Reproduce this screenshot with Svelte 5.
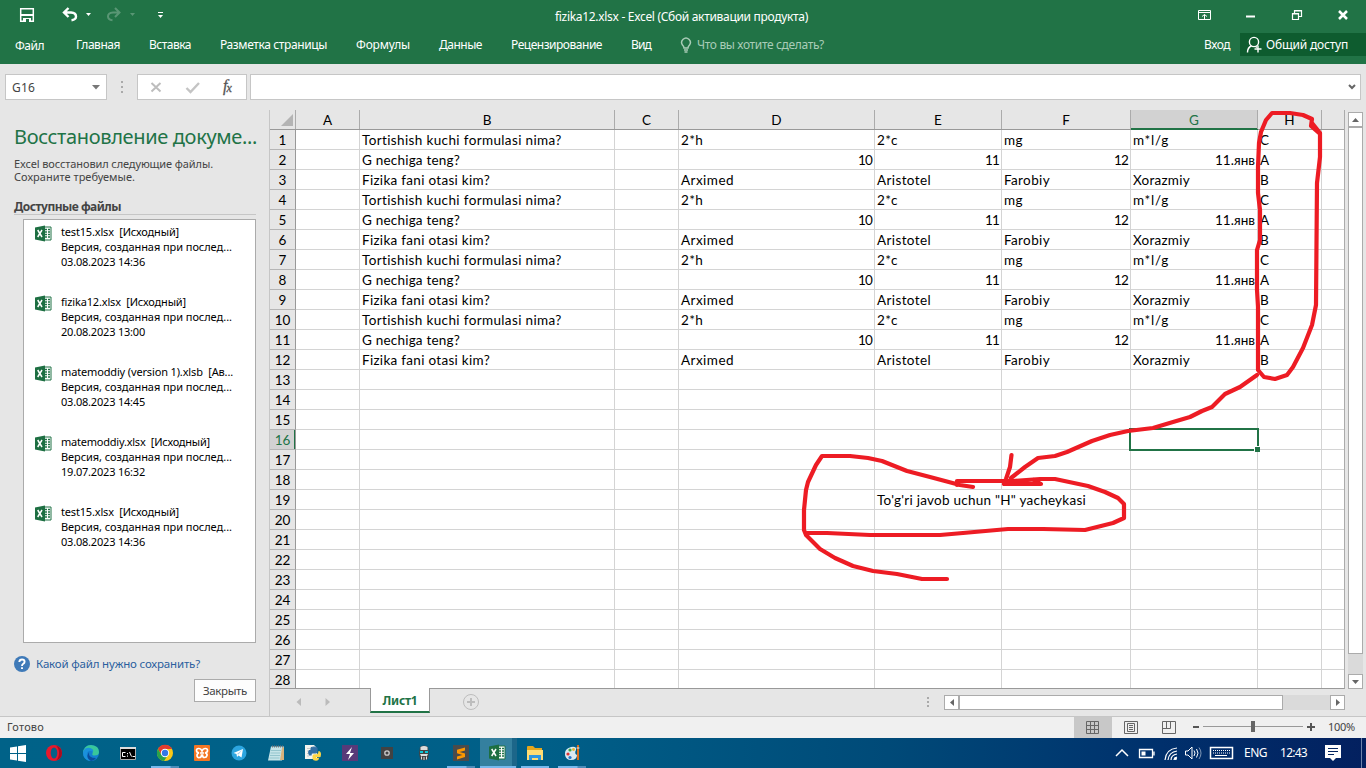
<script>
  // Spreads the letters of a label so that it takes up the given width
  function fit(node, width) {
    if (!width) return;
    const natural = node.getBoundingClientRect().width;
    node.style.letterSpacing = (width - natural) / node.textContent.length + 'px';
  }

  const tabs = [
    ['Главная', 44], ['Вставка', 42], ['Разметка страницы', 107], ['Формулы', 54],
    ['Данные', 43], ['Рецензирование', 91], ['Вид', 20]
  ];

  const columns = [
    ['A', 64], ['B', 255], ['C', 64], ['D', 196], ['E', 127], ['F', 129], ['G', 127], ['H', 64], ['', 23]
  ];

  const widths = {
    'Tortishish kuchi formulasi nima?': 200, 'G nechiga teng?': 98, 'Fizika fani otasi kim?': 128,
    '2*h': 22, '2*c': 21, Arximed: 53, Aristotel: 54, mg: 19, Farobiy: 46, 'm*l/g': 36, Xorazmiy: 57,
    '11.янв': 40, '10': 14, '11': 14, '12': 14, 'To\'g\'ri javob uchun "H" yacheykasi': 209
  };

  const pattern = [
    ['', 'Tortishish kuchi formulasi nima?', '', '2*h', '2*c', 'mg', 'm*l/g', 'C', ''],
    ['', 'G nechiga teng?', '', '10', '11', '12', '11.янв', 'A', ''],
    ['', 'Fizika fani otasi kim?', '', 'Arximed', 'Aristotel', 'Farobiy', 'Xorazmiy', 'B', '']
  ];

  const rows = Array.from({ length: 28 }, (_, i) => {
    if (i < 12) return pattern[i % 3];
    const empty = Array(9).fill('');
    if (i === 18) empty[4] = 'To\'g\'ri javob uchun "H" yacheykasi';
    return empty;
  });

  const files = [
    ['test15.xlsx  [Исходный]', '03.08.2023 14:36', 118],
    ['fizika12.xlsx  [Исходный]', '20.08.2023 13:00', 125],
    ['matemoddiy (version 1).xlsb  [Ав...', '03.08.2023 14:45', 172],
    ['matemoddiy.xlsx  [Исходный]', '19.07.2023 16:32', 149],
    ['test15.xlsx  [Исходный]', '03.08.2023 14:36', 118]
  ];

  const apps = [
    'opera', 'edge', 'cmd', 'chrome', 'xampp', 'telegram', 'notepad', 'python',
    'bolt', 'camera', 'skull', 'sublime', 'excel', 'explorer', 'paint'
  ];
  const stacked = ['chrome', 'sublime', 'excel', 'paint'];
</script>

{#snippet t(text, w)}<span class="t" use:fit={w}>{text}</span>{/snippet}

{#snippet excelLogo()}
  <path d="M10 3h7v13h-7z" fill="#fff" stroke="#217346" />
  <path d="M11 5.500h2M14 5.500h2M11 8h2M14 8h2M11 10.500h2M14 10.500h2M11 13h2M14 13h2" stroke="#217346" stroke-width="1.300" />
  <path d="M1 3.500 11 1.500v16L1 15.500z" fill="#1d6f42" />
  <path d="m3.700 6 4.300 7M8 6l-4.300 7" stroke="#fff" stroke-width="1.500" />
{/snippet}

<div class="screen">
  <header>
    <div class="titlebar">
      <svg class="quick" width="190" height="32" fill="none">
        <path d="M20.700 8.700h12.600v12.600H20.700z" stroke="#fff" stroke-width="1.500" />
        <path d="M20.500 15h13" stroke="#fff" stroke-width="2" />
        <path d="M23 18h8v4h-8z" fill="#fff" />
        <path d="M26 19h3v3h-3z" fill="#217346" />
        <path d="M68.500 8 64 12.500l4.500 4.500M64.500 12.500H71q5 .3 5 4 0 3.200-4.500 3.700" stroke="#fff" stroke-width="2.400" />
        <path d="M86 13h5l-2.500 3z" fill="#fff" />
        <g opacity=".25"><path d="m115 8 4.500 4.500L115 17M119 12.500h-6q-5 .3-5 4 0 3.200 4.500 3.700" stroke="#fff" stroke-width="2" /><path d="M130 13h5l-2.500 3z" fill="#fff" /></g>
        <path d="M158 12.500h5" stroke="#fff" />
        <path d="M158 15h5l-2.500 3z" fill="#fff" />
      </svg>
      <span class="doc">{@render t('fizika12.xlsx - Excel (Сбой активации продукта)', 253)}</span>
      <svg class="window" width="170" height="32" fill="none" stroke="#fff">
        <path d="M2.500 10.500h12v9h-12zM2.500 12.500h12M8.500 19v-4.500M6 16.500l2.500-2 2.500 2" />
        <path d="M50 16.500h9" stroke-width="2" />
        <path d="M98.500 13.500v-3h7v6h-3M96.500 13.500h6v6h-6zM96.500 14h6M98.500 11h7" stroke-width="1.200" />
        <path d="m143 11 8 8M151 11l-8 8" stroke-width="2.500" />
      </svg>
    </div>
    <nav>
      <span class="file">{@render t('Файл', 29)}</span>
      {#each tabs as [name, w]}<span class="tab" style="width:{w}px">{@render t(name, w)}</span>{/each}
      <svg width="12" height="16" fill="none" stroke="#a9ccb7" stroke-width="1.500"><path d="M4 11q0-1.500-1.500-3A4.300 4.300 0 1 1 9.500 8Q8 9.500 8 11zM4 13h4M4.500 15h3" /></svg>
      <span class="ask">{@render t('Что вы хотите сделать?', 127)}</span>
      <span class="login">{@render t('Вход', 26)}</span>
      <span class="share">
        <svg width="17" height="18" fill="none" stroke="#fff" stroke-width="1.400"><circle cx="8" cy="6" r="4.600" /><path d="M1.500 16.500q0-5 4-6.500M9.500 10.500l1.500 1M12 9.500v7M8.500 13h7" /></svg>
        {@render t('Общий доступ', 82)}
      </span>
    </nav>
  </header>

  <div class="formula">
    <div class="box name">{@render t('G16', 23)}<svg width="8" height="5"><path d="M0 0h8L4 4.500z" fill="#777" /></svg></div>
    <svg class="dots" width="3" height="14" fill="#aaa"><path d="M0 1h2v2H0zM0 6h2v2H0zM0 11h2v2H0z" /></svg>
    <div class="box tools">
      <svg width="108" height="24" fill="none">
        <path d="m13.500 8 9 8.500M22.500 8l-9 8.500" stroke="#bdbdbd" stroke-width="2" />
        <path d="m48.500 13 4 4 8.500-9" stroke="#c4c4c4" stroke-width="2.400" />
        <text x="85" y="16" font-family="Liberation Serif" font-style="italic" font-size="16" fill="#555" stroke="#555" stroke-width=".3">f<tspan font-size="12" dx="-1" dy="1">x</tspan></text>
      </svg>
    </div>
    <div class="box input"><svg width="8" height="6" fill="none" stroke="#666" stroke-width="2"><path d="m1 1 3 3 3-3" /></svg></div>
  </div>

  <main>
    <aside>
      <h1>{@render t('Восстановление докуме...', 243)}</h1>
      <p>{@render t('Excel восстановил следующие файлы.', 199)}<br />{@render t('Сохраните требуемые.', 121)}</p>
      <h2>{@render t('Доступные файлы', 107)}</h2>
      <div class="files">
        {#each files as [title, date, w]}
          <div class="item">
            <svg width="18" height="19" fill="none">{@render excelLogo()}</svg>
            <div>
              <div>{@render t(title, w)}</div>
              <div>{@render t('Версия, созданная при послед...', 171)}</div>
              <div>{@render t(date, 84)}</div>
            </div>
          </div>
        {/each}
      </div>
      <div class="help">
        <svg width="16" height="16"><circle cx="8" cy="8" r="8" fill="#3f7ab8" /><path d="M5.300 6Q5.500 3.500 8 3.500t2.600 2.200Q10.600 7 9 8q-1 .6-1 2M8 11.300v1.800" fill="none" stroke="#fff" stroke-width="1.900" /></svg>
        {@render t('Какой файл нужно сохранить?', 164)}
      </div>
      <button>{@render t('Закрыть', 44)}</button>
    </aside>

    <section>
      <div class="upper">
        <div class="sheet">
          <div class="heads">
            <div class="corner"><svg width="12" height="12"><path d="M12 0v12H0z" fill="#b4b4b4" /></svg></div>
            {#each columns as [name, w]}
              <div class="head" class:active={name === 'G'} class:last={!name} style="width:{w}px">{name}</div>
            {/each}
          </div>
          <div class="rows">
            {#each rows as row, i}
              <div class="row">
                <div class="num" class:active={i === 15}>{i + 1}</div>
                {#each row as value, c}
                  <div
                    class="cell"
                    class:right={/^1\d/.test(value)}
                    class:open={value.length > 33 || c === 8}
                    class:picked={i === 15 && c === 6}
                    style="width:{columns[c][1]}px"
                  >{#if value}{@render t(value, widths[value])}{/if}</div>
                {/each}
              </div>
            {/each}
          </div>
        </div>
        <div class="vscroll">
          <div class="arrow"><svg width="7" height="4"><path d="M0 4h7L3.500 0z" fill="#666" /></svg></div>
          <div class="vthumb"></div>
          <div class="arrow"><svg width="7" height="4"><path d="M0 0h7L3.500 4z" fill="#666" /></svg></div>
        </div>
      </div>
      <div class="sheetbar">
        <svg class="prevnext" width="100" height="26" fill="#bbb"><path d="M31 9v8l-4.500-4zM55.500 9v8l4.500-4z" /></svg>
        <div class="sheettab">{@render t('Лист1', 35)}</div>
        <svg class="plus" width="18" height="18" fill="none" stroke="#bdbdbd"><circle cx="9" cy="9" r="7.500" /><path d="M5 9h8M9 5v8" stroke-width="2" /></svg>
        <svg class="grip" width="3" height="12" fill="#aaa"><path d="M0 0h2v2H0zM0 4h2v2H0zM0 8h2v2H0z" /></svg>
        <div class="hscroll">
          <div class="arrow"><svg width="4" height="7"><path d="M4 0v7L0 3.500z" fill="#666" /></svg></div>
          <div class="hthumb"></div>
          <div class="arrow"><svg width="4" height="7"><path d="M0 0v7l4-3.500z" fill="#666" /></svg></div>
        </div>
      </div>
    </section>
  </main>

  <div class="status">
    <span class="ready">{@render t('Готово', 37)}</span>
    <div class="view on"><svg width="14" height="14" fill="none" stroke="#666"><path d="M.5 .5h12v12H.5zM.5 4.500h12M.5 8.500h12M4.500 .5v12M8.500 .5v12" /></svg></div>
    <div class="view"><svg width="14" height="14" fill="none" stroke="#666"><path d="M.5 .5h13v12H.5zM3.500 2.500h7v8h-7zM5 4.500h4M5 6.500h4M5 8.500h4" /></svg></div>
    <div class="view"><svg width="14" height="14" fill="none" stroke="#666"><path d="M.5 .5h13v12H.5zM.5 7.500h8V.5M4.500 .5v7" /></svg></div>
    <svg class="zoom" width="124" height="20"><path d="M0 9h6v2H0zM114 9h8v2h-8zM117 6h2v8h-2z" fill="#555" /><path d="M10 9.500h100" stroke="#999" /><path d="M58 4h4v11h-4z" fill="#666" /></svg>
    {@render t('100%', 27)}
  </div>

  <footer>
    <svg class="start" width="36" height="30" fill="#fff"><path d="m10 9.500 7-1V15h-7zM18 8.300l8-1.200V15h-8zM10 16h7v6.500l-7-1zM18 16h8v7.900l-8-1.200z" /></svg>
    {#each apps as app}
      <div class="app" class:sel={app === 'excel'} class:running={stacked.includes(app) || app === 'explorer'} class:stacked={stacked.includes(app)}>
        <svg width="20" height="20" fill="none">
          {#if app === 'opera'}
            <ellipse cx="10" cy="10" rx="8" ry="8" fill="#e8192c" /><ellipse cx="10" cy="10" rx="3.300" ry="5.500" fill="#046187" /><path d="M12 2.500q6 2 6 7.500t-6 7.500q3-3 3-7.500t-3-7.500" fill="#a70d20" />
          {:else if app === 'edge'}
            <circle cx="10" cy="10" r="8" fill="#1380d0" /><path d="M2 10Q3 2 10 2q8 .5 8 7 0 3.500-4.500 3.500-3 0-2-2Q13 6 8.500 5.500 4 5.500 2 10" fill="#39c79a" /><path d="M2 9q2-5 7-4 4 1 3 4-4-3-6 1-1 4 3 8-7-1-7-9" fill="#1a91dc" /><path d="M8 9q-1 6 7 6-2 3-5 3-6-3-2-9" fill="#0b4c9c" />
          {:else if app === 'cmd'}
            <path d="M2.500 4.500h15v12h-15z" fill="#000" stroke="#aaa" /><path d="M2 5h16" stroke="#ddd" stroke-width="2" /><path d="M7.500 9.500h-3v4h3M9.500 10v1.200M9.500 12.500v1.200M11.500 9l2 4.500M14.500 13.500H17" stroke="#fff" />
          {:else if app === 'chrome'}
            <circle cx="10" cy="10" r="8" fill="#fbc816" /><path d="M3 6A8 8 0 0 1 17 6h-7L6.500 12z" fill="#e33b2e" /><path d="M3 6a8 8 0 0 0 6 12l4-6-6.500 0z" fill="#29a24b" /><circle cx="10" cy="10" r="4.200" fill="#fff" /><circle cx="10" cy="10" r="3.200" fill="#3478e5" />
          {:else if app === 'xampp'}
            <rect x="2" y="2" width="16" height="16" rx="1" fill="#f37623" /><path d="M7 5.500h-.500q-2 0-2 2t2.500 2.300Q5 10.200 5 12.500t2.500 2q2 0 2-2.500h1q0 2.500 2 2.500t2.500-2-2-2.700q2.500-.3 2.500-2.300t-2-2h-.5q-2 0-3 2.500-1-2.500-3-2.500zM8 10h4" stroke="#fff" stroke-width="1.700" />
          {:else if app === 'telegram'}
            <circle cx="10" cy="10" r="7.500" fill="#2ca5df" /><path d="m4.500 10 9.500-4-1.500 8.500-3-2-1.500 1.500-.5-3z" fill="#fff" /><path d="m8 11 5-4-3.500 4.500" fill="#a5cee6" />
          {:else if app === 'notepad'}
            <path d="M5 3.500h13l-2 14H2z" fill="#c5e4e8" /><path d="m16 5 2-1v13h-4z" fill="#d8b27c" /><path d="M6 3.500h11" stroke="#777" stroke-width="2" stroke-dasharray="1 1" /><path d="M5 7.500h10M4.500 10h10M4 12.500h10M3.500 15h10" stroke="#94c5cd" />
          {:else if app === 'python'}
            <path d="M2 2h9l3 3v11H2z" fill="#f4f4ef" /><path d="M4 5.500h3M4 8h2M4 10.500h2M4 13h2" stroke="#c9c9c9" /><path d="M8 7V5.500Q8 4 11 4t3 1.500V8q0 2-2 2H9.500Q8 10 8 12H6.500Q5 9 6.500 7.500H11" fill="#326fa4" stroke="#326fa4" stroke-width="1.200" /><path d="M15.500 8q2.500 0 2.500 3.500T15.500 14H13v.8h3q0 3-3 3t-3.500-2V13q0-1.800 2-1.800h2.500q1.500-.5 1.500-3.200" fill="#ffd545" />
          {:else if app === 'bolt'}
            <path d="M2 2h16v16H2z" fill="#583a79" /><path d="m12 4-6 7h4l-2 6 6-7h-4z" fill="#fff" />
          {:else if app === 'camera'}
            <path d="M4 4h12v12H4z" fill="#424242" /><circle cx="10" cy="10" r="2.200" stroke="#ccc" stroke-width="1.300" />
          {:else if app === 'skull'}
            <path d="M6 4q4-3 8 0l1 6-1 6q-4 2.500-8 0l-1-6z" fill="#444" /><path d="M6.500 4q3.500-2 7 0v3h-7zM6 11h8l-1 2H7z" fill="#ddd" /><path d="M6 8h3v2H6zM11 8h3v2h-3z" fill="#0bc6d6" /><path d="M7.500 13.500v3M10 14v3M12.500 13.500v3" stroke="#ddd" />
          {:else if app === 'sublime'}
            <path d="M2 2h16v16H2z" fill="#4b4b4b" /><path d="m14 4.500-8 2.300v3.500l5.500 1.700-5.500 1.500v3l8-2.500v-3.500L8.500 9 14 7.500z" fill="#ff9800" />
          {:else if app === 'excel'}
            {@render excelLogo()}
          {:else if app === 'explorer'}
            <path d="M2 4q0-1 1-1h5l2 2h7v4H2z" fill="#e5a61c" /><path d="M2 7h16v10H2z" fill="#ffdc73" /><path d="M4 17v-5h12v5h-3v-2H7v2z" fill="#2e96e0" />
          {:else}
            <path d="M3 12q-1-6 6-8 6-1 5 3-2 4 1 5 0 5-6 5-5 0-6-5" fill="#d9e9f2" /><circle cx="6" cy="11" r="1.600" fill="#d33" /><circle cx="8" cy="7" r="1.600" fill="#39a54a" /><circle cx="11.500" cy="6.500" r="1.400" fill="#edb52b" /><circle cx="8" cy="14.500" r="1.600" fill="#2674cc" /><path d="M16 2v15" stroke="#d96c1c" stroke-width="2" /><path d="M14.500 5h3" stroke="#eee" />
          {/if}
        </svg>
      </div>
    {/each}
    <svg class="tray" width="130" height="30" fill="none" stroke="#fff">
      <path d="m4 18 6-6 6 6" stroke-width="1.500" />
      <path d="M27.500 11.500h13v8h-13zM42 13.500v4" stroke-width="1.300" /><path d="M29.500 13.500h4v4h-4z" fill="#fff" stroke="none" />
      <path d="M53 22q1-11 12-12M56 22q1-8 9-9M59 22q0-5 6-6M62 22q0-2 3-3" stroke-width="1.200" /><circle cx="63.500" cy="20.500" r="1.500" fill="#fff" stroke="none" />
      <path d="M73.500 13v4h2.500l4 4V9l-4 4zM82 12.500q2 2.500 0 5.500M84.500 11q3 4 0 8.500" /><path d="M87 9.500q4 5.500 0 11.500" opacity=".5" />
      <path d="M98.500 9.500h22v11h-22z" stroke-width="1.500" /><path d="M101 12.500h17M101 15h17" stroke-dasharray="1 1" /><path d="M103 17.500h12" />
    </svg>
    <span class="lang">{@render t('ENG', 23)}</span>
    <span class="clock">{@render t('12:43', 27)}</span>
    <svg class="note" width="18" height="30"><path d="M1 7h16v13h-5l-3 3-3-3H1z" fill="#fff" /><path d="M4 10.500h10M4 13.500h10M4 16.500h6" stroke="#03245f" /></svg>
    <span class="desk"></span>
  </footer>

  <svg class="ink" width="1366" height="768">
    <path d="M1319 133 1311 126 1312 119 1303 115 1290 113H1272L1266 120 1261 132 1259 143 1258 167V193L1260 210V240L1257 250V290L1258 307V370L1264 377 1275 379 1287 375 1293 367 1303 348 1312 325 1316 305 1317 183 1320 157V133L1312 123" />
    <path d="M1257 375 1240 387 1225 394 1212 407 1202 411 1190 417 1173 422 1153 428 1128 431 1110 435 1092 441 1067 452 1055 456 1038 458 1025 467 1011 478" />
    <path d="M1011.500 455 1010 467 1006 479 1004 484H1041L1034 480" />
    <path d="M973 487 960 485 930 477 907 471 882 461 868 458 850 456H822L816 465 808 482 806 490 804 510V530L806 535 820 549 835 558 853 566 873 571 897 574 922 579H947" />
    <path d="M957 485V481H1013L1040 479H1055L1088 486 1105 492 1118 498 1124 504V518L1113 523 1085 530 1043 529H1008L963 533 940 535H870L827 533H807" />
  </svg>
</div>

<style>
  :global(body) { margin: 0; overflow: hidden; }
  .screen { position: relative; width: 1366px; height: 768px; display: flex; flex-direction: column; background: #e6e6e6; font: 12px 'Noto Sans', sans-serif; color: #444; overflow: hidden; }
  .screen * { box-sizing: border-box; }
  svg { display: block; flex: none; }
  .t { display: inline-block; white-space: pre; }
  header { height: 64px; background: #217346; color: #fff; }
  .titlebar { height: 32px; display: flex; align-items: center; }
  .doc { margin-left: 365px; width: 253px; padding-top: 1px; }
  .window { margin-left: 388px; }
  nav { height: 25px; display: flex; align-items: center; }
  .file { width: 29px; margin: 1px 3px 0 15px; }
  .tab { margin-left: 29px; }
  nav > svg { margin-left: 29px; }
  .ask { margin-left: 5px; width: 127px; color: #a9ccb7; }
  .login { margin-left: 380px; width: 26px; }
  .share { margin-left: 10px; height: 23px; width: 126px; background: #0e5c2f; display: flex; align-items: center; gap: 3px; padding-left: 6px; }
  .formula { height: 46px; display: flex; padding: 10px 5px 0; }
  .box { height: 26px; background: #fff; border: 1px solid #c6c6c6; }
  .name { width: 102px; display: flex; align-items: center; justify-content: space-between; padding: 0 6px; }
  .dots { margin: 6px 14px 0 14px; }
  .tools { width: 110px; margin-left: -1px; }
  .input { width: 1111px; margin-left: 3px; display: flex; align-items: center; justify-content: flex-end; padding-right: 4px; }
  main { height: 606px; display: flex; }
  aside { width: 269px; padding: 12px 13px 0 14px; display: flex; flex-direction: column; }
  h1 { margin: 0; height: 32px; font-size: 20px; line-height: 30px; font-weight: 400; color: #217346; white-space: nowrap; }
  p { margin: 3px 0 0; height: 43px; font-size: 11px; line-height: 13px; }
  h2 { margin: 0; height: 15px; font-size: 12px; line-height: 14px; border-bottom: 1px solid #c6c6c6; width: 242px; }
  .files { margin: 4px 0 0 9px; width: 233px; height: 424px; background: #fff; border: 1px solid #ababab; padding: 4px 0 0 10px; color: #000; font-size: 11px; line-height: 15px; }
  .item { display: flex; height: 70px; gap: 9px; }
  .help { margin-top: 13px; display: flex; align-items: center; gap: 6px; height: 16px; font-size: 11.500px; line-height: 14px; color: #2b5f9e; }
  button { align-self: flex-end; margin: 7px 0 0; width: 62px; height: 23px; padding: 0 0 1px; border: 1px solid #ababab; background: #fdfdfd; font: 11.500px 'Noto Sans', sans-serif; color: #444; }
  section { width: 1097px; border-left: 1px solid #c6c6c6; display: flex; flex-direction: column; }
  .upper { height: 579px; display: flex; gap: 3px; }
  .sheet { width: 1075px; border-right: 1px solid #ababab; border-bottom: 1px solid #999; display: flex; flex-direction: column; font: 13.500px Lato, 'Noto Sans', sans-serif; color: #000; }
  .heads { height: 20px; display: flex; border-bottom: 1px solid #999; overflow: visible; }
  .corner { width: 26px; flex: none; border-right: 1px solid #ababab; padding: 4px 0 0 11px; }
  .head { border-right: 1px solid #ababab; text-align: center; line-height: 20px; height: 19px; flex: none; }
  .head.last { border-right: 0; }
  .head.active { background: #d2d2d2; color: #217346; box-shadow: 0 1px #217346, inset 0 -1px #217346; }
  .rows { height: 558px; overflow: hidden; background: #fff; }
  .row { height: 20px; display: flex; }
  .num { width: 26px; flex: none; background: #e6e6e6; border-right: 1px solid #999; border-bottom: 1px solid #b5b5b5; text-align: center; line-height: 21px; }
  .num.active { background: #d2d2d2; color: #217346; box-shadow: inset -1px 0 #217346; }
  .cell { flex: none; border-right: 1px solid #d4d4d4; border-bottom: 1px solid #d4d4d4; padding: 0 2px; line-height: 20px; white-space: nowrap; }
  .cell.right { text-align: right; padding-right: 2px; }
  .cell.open { border-right-color: transparent; }
  .picked { position: relative; }
  .picked::before { content: ''; position: absolute; inset: -2px; border: 2px solid #217346; }
  .picked::after { content: ''; position: absolute; right: -3px; bottom: -3px; width: 5px; height: 5px; background: #217346; box-shadow: -1px -1px #fff; }
  .vscroll { margin-top: 2px; width: 15px; height: 577px; background: #dadada; display: flex; flex-direction: column; }
  .arrow { width: 15px; height: 15px; flex: none; background: #fff; border: 1px solid #ababab; display: grid; place-items: center; }
  .vthumb { width: 15px; height: 527px; margin-bottom: 20px; background: #fff; border: 1px solid #ababab; }
  .sheetbar { height: 26px; display: flex; }
  .sheettab { width: 60px; height: 25px; margin-top: -1px; background: #fff; border: 1px solid #999; border-top: 0; border-bottom: 2px solid #217346; text-align: center; font-weight: 700; line-height: 25px; color: #217346; }
  .plus { margin: 4px 0 0 32px; }
  .grip { margin: 8px 0 0 447px; }
  .hscroll { margin: 6px 0 0 14px; width: 401px; height: 15px; background: #dadada; display: flex; }
  .hthumb { width: 324px; margin-right: 47px; border: 1px solid #ababab; background: #fff; }
  .status { height: 22px; border-top: 1px solid #c6c6c6; background: #f0f0f0; display: flex; align-items: center; font-size: 11px; line-height: 13px; }
  .status > .t, .ready { padding-bottom: 2px; }
  .ready { padding-left: 7px; width: 1074px; }
  .view { width: 38px; height: 21px; display: grid; place-items: center; }
  .on { background: #c8c8c8; }
  .zoom { margin: -1px 11px 0 5px; }
  footer { height: 30px; display: flex; background: linear-gradient(90deg, #006288 0, #005f88 40%, #004a78 65%, #00306c 85%, #03205f); color: #fff; line-height: 30px; }
  .app { width: 37px; height: 30px; padding: 5px 8px 0; position: relative; }
  .sel { background: linear-gradient(90deg, #34809f 32px, #1c6689 32px); }
  .running::after { content: ''; position: absolute; left: 4px; bottom: 0; width: 28px; height: 2px; background: #76b9ed; }
  .stacked::after { background: linear-gradient(90deg, #76b9ed 19px, #4c8cb9 20px); }
  .sel::after { left: 0; width: 36px; background: #76b9ed; }
  .tray { margin-left: 521px; }
  .lang { margin-left: 2px; width: 23px; }
  .clock { margin-left: 13px; width: 27px; }
  .note { margin-left: 17px; }
  .desk { margin-left: 19px; width: 1px; background: #6d83ab; }
  .ink { position: absolute; left: 0; top: 0; pointer-events: none; fill: none; stroke: #ed1c24; stroke-width: 4.200; stroke-linecap: round; stroke-linejoin: round; }
</style>
